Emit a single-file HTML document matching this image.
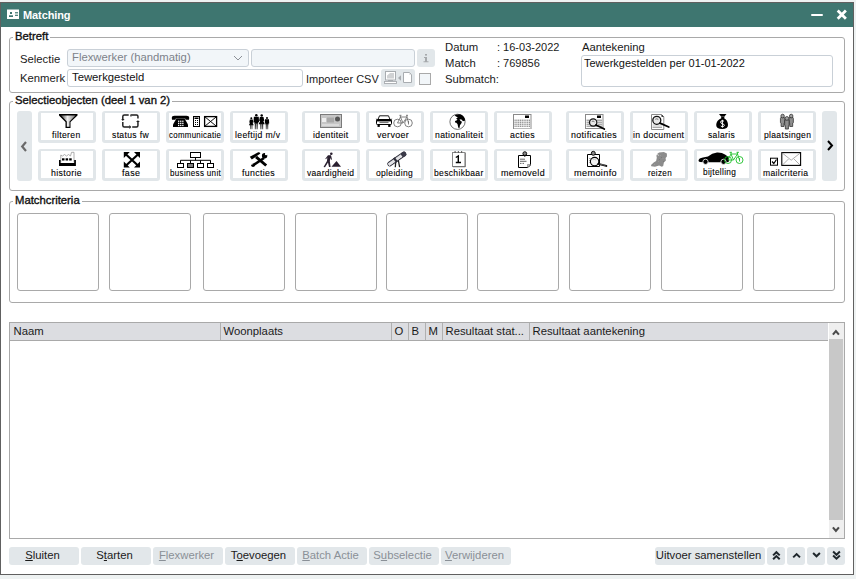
<!DOCTYPE html>
<html><head><meta charset="utf-8">
<style>
*{box-sizing:border-box;margin:0;padding:0}
html,body{width:856px;height:579px;overflow:hidden;background:#eef2f2;font-family:"Liberation Sans",sans-serif;font-size:11.3px;color:#1a1a1a}
.a{position:absolute}
#win{position:absolute;left:0;top:2px;width:854px;height:573px;background:#fff;border:1px solid #606060}
#title{position:absolute;left:1px;top:3px;width:852px;height:24px;background:#3e7670;color:#fff;font-weight:bold;font-size:11px}
.fs{position:absolute;border:1px solid #a9a9a9;border-radius:3px}
.lg{position:absolute;background:#fff;font-weight:normal;font-size:11.3px;-webkit-text-stroke:0.35px #111;padding:0 2px 0 2px;line-height:13px;color:#111}
.t{position:absolute;white-space:pre;line-height:13px}
.inp{position:absolute;border:1px solid #c9d0d7;border-radius:3px;background:#fff}
.dis{background:#f2f6f9;color:#7b8088}
.tile{position:absolute;width:58px;height:32px;border:3px solid #e1e6e9;border-top-width:2px;border-radius:3px;background:#fff}
.lb{position:absolute;font-size:9px;line-height:11px;color:#000;white-space:nowrap;transform-origin:0 0;-webkit-text-stroke:0.1px #000}
.arr{position:absolute;width:15px;height:70px;background:#e2e7ea;border-radius:3px}
.box{position:absolute;top:213px;width:82px;height:78px;border:1px solid #a9a9a9;border-radius:3px}
.btn{position:absolute;top:547px;height:18px;width:70px;background:#e2e7ea;border-radius:3px;text-align:center;line-height:17px;padding-right:3px;color:#1a1a1a}
.btn.d{color:#8a9097}
u{text-decoration:underline;text-underline-offset:1px;text-decoration-thickness:1px}
.hd{position:absolute;top:0;height:18px;line-height:17px;border-left:1px solid #b4b4b4;padding-left:3px;white-space:nowrap;overflow:hidden}
</style></head><body>
<div id="win"></div>
  <div id="title">
    <svg class="a" style="left:0;top:0" width="24" height="24" viewBox="0 0 24 24"><rect x="6" y="6.5" width="12" height="9.5" fill="#fff"/><rect x="9" y="9" width="2" height="2" fill="#3e7670"/><rect x="8" y="12.3" width="4" height="1.7" fill="#3e7670"/><rect x="14" y="9.6" width="3" height="2.4" fill="#c4d6d3"/><rect x="14" y="9.2" width="3" height="0.9" fill="#3e7670"/><rect x="14" y="12" width="3" height="0.9" fill="#3e7670"/></svg>
    <div class="t" style="left:22px;top:6px;font-weight:bold;letter-spacing:-0.1px">Matching</div>
    <div class="a" style="left:810px;top:10.5px;width:12px;height:2.5px;background:#fff;border-radius:1px"></div>
    <svg class="a" style="left:835px;top:6px" width="12" height="12" viewBox="0 0 12 12"><path d="M1.7 1.5 L9.9 9.7 M9.9 1.5 L1.7 9.7" stroke="#fff" stroke-width="2.8"/></svg>
  </div>
<!-- Betreft -->
<div class="fs" style="left:9px;top:37px;width:836px;height:56px"></div>
<div class="lg" style="left:13px;top:30px">Betreft</div>
<div class="t" style="left:20px;top:53px">Selectie</div>
<div class="t" style="left:20px;top:72px">Kenmerk</div>
<div class="inp dis" style="left:67px;top:49px;width:182px;height:18px"></div>
<div class="t" style="left:72px;top:51px;color:#7d828a">Flexwerker (handmatig)</div>
<svg class="a" style="left:233px;top:55px" width="10" height="6" viewBox="0 0 10 6"><path d="M1 1 L5 5 L9 1" fill="none" stroke="#80858b" stroke-width="0.9"/></svg>
<div class="inp dis" style="left:251px;top:49px;width:164px;height:18px"></div>
<div class="a" style="left:417px;top:49px;width:18px;height:18px;background:#e2e7ea;border-radius:3px"></div>
<svg class="a" style="left:417px;top:49px" width="18" height="18" viewBox="0 0 18 18"><rect x="8" y="5" width="2" height="1.6" fill="#a6a9ac"/><path d="M7 8 H10 V12.3 H11.5 V13.3 H6.5 V12.3 H8 V9 H7Z" fill="#a6a9ac"/></svg>
<div class="inp" style="left:67px;top:69px;width:236px;height:18px"></div>
<div class="t" style="left:72px;top:71px;color:#111">Tewerkgesteld</div>
<div class="t" style="left:306px;top:73px;font-size:11px">Importeer CSV</div>
<div class="a" style="left:381px;top:69px;width:34px;height:18px;background:#e2e7ea;border-radius:3px"></div>
<svg class="a" style="left:381px;top:69px" width="34" height="18" viewBox="0 0 34 18">
  <rect x="4.5" y="2.5" width="10" height="8.5" fill="#fff" stroke="#a8acb0"/>
  <rect x="6" y="4" width="7" height="5.5" fill="#d0d2d4"/>
  <path d="M6 4 H9 L6 6.5Z" fill="#fff"/>
  <rect x="7" y="11" width="5" height="1.2" fill="#a8acb0"/>
  <rect x="3.5" y="12.5" width="12" height="2" fill="#fff" stroke="#a8acb0" stroke-width="0.9"/>
  <path d="M17 9 L20 6.3 L20 11.7Z" fill="#a8acb0"/>
  <path d="M22.5 3.5 H28.5 L30.5 5.5 V13.5 H22.5Z" fill="#fff" stroke="#a8acb0"/>
  <path d="M28.3 3.7 V5.7 H30.3" fill="#d0d2d4"/>
</svg>
<div class="a" style="left:419px;top:73px;width:12px;height:12px;border:1px solid #a9a9a9;background:#f2f6f9"></div>
<div class="t" style="left:445px;top:41px">Datum</div>
<div class="t" style="left:497px;top:41px;font-size:11px">: 16-03-2022</div>
<div class="t" style="left:445px;top:57px">Match</div>
<div class="t" style="left:497px;top:57px;font-size:11px">: 769856</div>
<div class="t" style="left:445px;top:73px">Submatch:</div>
<div class="t" style="left:582px;top:41px">Aantekening</div>
<div class="inp" style="left:581px;top:55px;width:252px;height:32px"></div>
<div class="t" style="left:584px;top:57px;color:#111;font-size:11px">Tewerkgestelden per 01-01-2022</div>

<!-- Selectieobjecten -->
<div class="fs" style="left:9px;top:101px;width:836px;height:90px"></div>
<div class="lg" style="left:13px;top:94px">Selectieobjecten (deel 1 van 2)</div>
<div class="arr" style="left:17px;top:111px"></div>
<svg class="a" style="left:20px;top:140.5px" width="8" height="11" viewBox="0 0 8 11"><path d="M6 1 L2.2 5.5 L6 10" fill="none" stroke="#6a6a6a" stroke-width="2.2"/></svg>
<div class="arr" style="left:822px;top:111px"></div>
<svg class="a" style="left:826px;top:140px" width="8" height="11" viewBox="0 0 8 11"><path d="M2 1 L6 5.5 L2 10" fill="none" stroke="#000" stroke-width="2"/></svg>
<div class="tile" style="left:38px;top:111px"></div>
<svg class="a" style="left:38px;top:111px" width="58" height="32" viewBox="0 0 58 32">
<defs><linearGradient id="fg" x1="0" y1="0" x2="1" y2="0"><stop offset="0" stop-color="#444"/><stop offset="0.45" stop-color="#eee"/><stop offset="1" stop-color="#777"/></linearGradient></defs>
<path d="M21 3 H39.5 V4.5 L32.5 11 V17 H27.5 V11 L21 4.5 Z" fill="#000"/>
<path d="M23 4.5 H37.5 L31.5 10.5 V15.8 H28.8 V10.5 Z" fill="url(#fg)"/>
</svg>
<div class="lb" style="left:52.30px;top:129.98px;letter-spacing:0.35px;transform:scaleX(0.956)">filteren</div>
<div class="tile" style="left:102px;top:111px"></div>
<svg class="a" style="left:102px;top:111px" width="58" height="32" viewBox="0 0 58 32">
<g fill="none" stroke="#1e1e1e" stroke-width="1.45" stroke-linejoin="round">
<path d="M26.7 3.9 H22.3 Q20.8 3.9 20.8 5.4 V8.6"/>
<path d="M28.6 3.9 H34.6 Q35.95 3.9 35.95 5.3 V7.6"/>
<path d="M20.8 11 V14.4 Q20.8 15.9 22.3 15.9 H27.8"/>
<path d="M30.2 15.9 H34.5 Q35.95 15.9 35.95 14.4 V10.5"/>
</g>
<path d="M19.2 8.1 H22.6 L20.8 9.9Z M27.4 13.9 V17.9 L29.3 15.9Z M34 11.1 H37.9 L35.95 9.2Z M28.4 3.3 V5.5 L29.6 5.8Z" fill="#1e1e1e"/>
</svg>
<div class="lb" style="left:112.30px;top:129.98px;letter-spacing:0.35px;transform:scaleX(0.955)">status fw</div>
<div class="tile" style="left:166px;top:111px"></div>
<svg class="a" style="left:166px;top:111px" width="58" height="32" viewBox="0 0 58 32">
<path d="M5.8 7 Q5.8 4.8 8.5 4.8 H20.5 Q23.2 4.8 23.2 7 L23 8.8 H19.5 L19.2 7.4 H9.8 L9.5 8.8 H6Z" fill="#000"/>
<path d="M10.5 7.5 H18.5 L22 13.5 V16 H7 V13.5Z" fill="#000"/>
<g fill="#fff"><rect x="12" y="9.6" width="1.3" height="1.3"/><rect x="14.1" y="9.6" width="1.3" height="1.3"/><rect x="16.2" y="9.6" width="1.3" height="1.3"/>
<rect x="12" y="11.7" width="1.3" height="1.3"/><rect x="14.1" y="11.7" width="1.3" height="1.3"/><rect x="16.2" y="11.7" width="1.3" height="1.3"/>
<rect x="12" y="13.8" width="1.3" height="1.3"/><rect x="14.1" y="13.8" width="1.3" height="1.3"/><rect x="16.2" y="13.8" width="1.3" height="1.3"/></g>
<rect x="27.5" y="5.5" width="6" height="10" fill="#fff" stroke="#000" stroke-width="1"/>
<rect x="28.5" y="6.5" width="4" height="1.5" fill="#000"/>
<g fill="#000"><rect x="29" y="9" width="1" height="1"/><rect x="31" y="9" width="1" height="1"/><rect x="29" y="11" width="1" height="1"/><rect x="31" y="11" width="1" height="1"/><rect x="29" y="13" width="1" height="1"/><rect x="31" y="13" width="1" height="1"/></g>
<rect x="38.6" y="5.6" width="12" height="9.8" fill="#fff" stroke="#000" stroke-width="1.3"/>
<path d="M38.6 5.6 L50.6 15.4 M50.6 5.6 L38.6 15.4" stroke="#000" stroke-width="0.95"/>
</svg>
<div class="lb" style="left:169.20px;top:129.98px;letter-spacing:0.35px;transform:scaleX(0.874)">communicatie</div>
<div class="tile" style="left:230px;top:111px"></div>
<svg class="a" style="left:230px;top:111px" width="58" height="32" viewBox="0 0 58 32"><defs><linearGradient id="lg" x1="0" y1="0" x2="0" y2="1"><stop offset="0" stop-color="#222"/><stop offset="1" stop-color="#777"/></linearGradient></defs><circle cx="21.3" cy="7.16" r="1.00" fill="#000"/><path d="M19.86 8.44 H22.74 L23.38 11.40 L22.58 11.64 L23.70 14.20 H18.90 L20.02 11.64 L19.22 11.40Z" fill="#000"/><rect x="20.10" y="13.64" width="1.04" height="4.56" fill="url(#lg)"/><rect x="21.46" y="13.64" width="1.04" height="4.56" fill="url(#lg)"/><circle cx="26.3" cy="4.22" r="1.27" fill="#000"/><path d="M23.85 5.86 H28.75 L29.05 11.16 H28.14 V12.69 H24.46 V11.16 H23.55Z" fill="#000"/><rect x="24.77" y="12.49" width="1.33" height="5.81" fill="url(#lg)"/><rect x="26.50" y="12.49" width="1.33" height="5.81" fill="url(#lg)"/><circle cx="31.7" cy="4.50" r="1.25" fill="#000"/><path d="M29.90 6.10 H33.50 L34.30 9.80 L33.30 10.10 L34.70 13.30 H28.70 L30.10 10.10 L29.10 9.80Z" fill="#000"/><rect x="30.20" y="12.60" width="1.30" height="5.70" fill="url(#lg)"/><rect x="31.90" y="12.60" width="1.30" height="5.70" fill="url(#lg)"/><circle cx="37" cy="6.98" r="1.03" fill="#000"/><path d="M35.03 8.30 H38.97 L39.21 12.56 H38.48 V13.79 H35.52 V12.56 H34.79Z" fill="#000"/><rect x="35.77" y="13.63" width="1.07" height="4.67" fill="url(#lg)"/><rect x="37.16" y="13.63" width="1.07" height="4.67" fill="url(#lg)"/></svg>
<div class="lb" style="left:235.30px;top:129.98px;letter-spacing:0.35px;transform:scaleX(0.960)">leeftijd m/v</div>
<div class="tile" style="left:302px;top:111px"></div>
<svg class="a" style="left:302px;top:111px" width="58" height="32" viewBox="0 0 58 32">
<rect x="18.5" y="3.5" width="21" height="13" fill="#c6c6c6" stroke="#7a7a7a" stroke-width="1"/>
<rect x="20" y="7" width="4" height="4" fill="#eee"/>
<rect x="25" y="6.5" width="7" height="5" fill="#a8a8a8"/>
<circle cx="35.5" cy="8" r="2.5" fill="#555"/>
<rect x="20" y="13" width="17" height="2" fill="#dadada"/>
</svg>
<div class="lb" style="left:313.00px;top:129.98px;letter-spacing:0.35px;transform:scaleX(0.959)">identiteit</div>
<div class="tile" style="left:366px;top:111px"></div>
<svg class="a" style="left:366px;top:111px" width="58" height="32" viewBox="0 0 58 32">
<path d="M12 8.5 L13.5 4.8 H22.5 L24 8.5Z" fill="#fff" stroke="#000" stroke-width="0.9"/>
<path d="M9.5 7.8 L12 8 L11.5 9 Z M26.5 7.8 L24 8 L24.5 9Z" fill="#000"/>
<rect x="10.5" y="8.5" width="15" height="5" rx="0.8" fill="#fff" stroke="#000" stroke-width="1"/>
<rect x="10.8" y="8.6" width="14.4" height="1.8" fill="#000"/>
<rect x="13.5" y="10.8" width="9" height="1.3" fill="#777"/>
<rect x="11.5" y="13.4" width="2.3" height="2.5" fill="#000"/>
<rect x="22.2" y="13.4" width="2.3" height="2.5" fill="#000"/>
<g fill="none" stroke="#6a6a6a" stroke-width="0.85">
<circle cx="31.5" cy="12" r="3.8"/><circle cx="42.5" cy="12" r="3.8"/>
<path d="M31.5 12 L34.5 6 H41 L42.5 12 M34.5 6 L37 12 H31.5 M41 6 L37 12 M33.5 4.3 H35.5 M40 4.3 H42 M34.5 6 L34.2 4.3 M41 6 L41 4.3 M42.5 10 V13.5"/>
</g>
</svg>
<div class="lb" style="left:377.40px;top:129.98px;letter-spacing:0.35px;transform:scaleX(0.989)">vervoer</div>
<div class="tile" style="left:430px;top:111px"></div>
<svg class="a" style="left:430px;top:111px" width="58" height="32" viewBox="0 0 58 32">
<circle cx="27.5" cy="10.8" r="7.6" fill="#fff" stroke="#333" stroke-width="0.7"/>
<path d="M24.5 4.5 Q28 2.8 31 3.6 Q34.5 5 35.2 9.5 L33 10.2 L31.5 8.5 L29.5 8.2 L30.5 10 L32 10.8 L31 13 L30 14 L29.5 17 L28.3 16.8 L27.5 13 L26 11.5 L25.2 11.8 L25 10 L26.5 9.5 L27.5 8.5 L26 7.8 L27.8 6.5 L26.5 5.8 Z" fill="#000"/>
</svg>
<div class="lb" style="left:434.60px;top:129.98px;letter-spacing:0.35px;transform:scaleX(0.961)">nationaliteit</div>
<div class="tile" style="left:494px;top:111px"></div>
<svg class="a" style="left:494px;top:111px" width="58" height="32" viewBox="0 0 58 32">
<rect x="19.5" y="3.5" width="17.5" height="14" fill="#fff" stroke="#8a8a8a" stroke-width="1"/>
<path d="M37 4 V17.5 H20" fill="none" stroke="#c8c8c8" stroke-width="0.8"/>
<rect x="31" y="4.5" width="4" height="2.5" fill="#000"/>
<g stroke="#555" stroke-width="0.9" stroke-dasharray="1.2 0.6"><path d="M20.5 9.2 H36"/><path d="M20.5 11.2 H36"/><path d="M20.5 13.2 H36"/><path d="M20.5 15.2 H36"/></g>
</svg>
<div class="lb" style="left:509.50px;top:129.98px;letter-spacing:0.35px;transform:scaleX(0.977)">acties</div>
<div class="tile" style="left:566px;top:111px"></div>
<svg class="a" style="left:566px;top:111px" width="58" height="32" viewBox="0 0 58 32">
<rect x="19.5" y="3.5" width="17.5" height="14" fill="#fff" stroke="#8a8a8a" stroke-width="1"/>
<rect x="31" y="4.5" width="4" height="2.5" fill="#000"/>
<g stroke="#777" stroke-width="0.9"><path d="M20.5 9.2 H24 M31 9.2 H36"/><path d="M20.5 11.2 H23 M32 11.2 H36"/><path d="M20.5 13.2 H23 M32 13.2 H36"/><path d="M20.5 15.2 H36"/></g>
<circle cx="27.2" cy="11.5" r="3.7" fill="#e8e8e8" stroke="#111" stroke-width="1.3"/>
<path d="M25.8 10.5 Q27 9.5 28.5 10.8" fill="none" stroke="#444" stroke-width="0.7"/>
<path d="M30 14 L38.3 18" stroke="#000" stroke-width="1.8" stroke-linecap="round"/>
</svg>
<div class="lb" style="left:571.30px;top:129.98px;letter-spacing:0.35px;transform:scaleX(0.985)">notificaties</div>
<div class="tile" style="left:630px;top:111px"></div>
<svg class="a" style="left:630px;top:111px" width="58" height="32" viewBox="0 0 58 32">
<path d="M21.5 3.5 H31.5 L33.8 5.8 V18.5 H21.5Z" fill="#fff" stroke="#8a8a8a" stroke-width="1"/>
<path d="M31.5 3.5 V5.8 H33.8" fill="#000"/>
<path d="M22.5 16.2 H32" stroke="#666" stroke-width="0.8"/>
<path d="M22.5 14 H32" stroke="#999" stroke-width="0.6"/>
<circle cx="26.8" cy="9.3" r="4" fill="#e8e8e8" stroke="#111" stroke-width="1.3"/>
<path d="M25.3 8.3 Q26.8 7.2 28.3 8.5" fill="none" stroke="#444" stroke-width="0.7"/>
<path d="M30 12.2 L38.8 16" stroke="#000" stroke-width="1.8" stroke-linecap="round"/>
</svg>
<div class="lb" style="left:633.40px;top:129.98px;letter-spacing:0.35px;transform:scaleX(0.971)">in document</div>
<div class="tile" style="left:694px;top:111px"></div>
<svg class="a" style="left:694px;top:111px" width="58" height="32" viewBox="0 0 58 32">
<path d="M25 3 H32.5 L30.5 5.5 H27Z" fill="#000"/>
<path d="M27 5.5 H30.5 L30.2 7.2 Q34 9.5 34 14 Q34 18 28.3 18 Q22.2 18 22.2 14 Q22.2 9.5 27.3 7.2Z" fill="#000"/>
<path d="M30 10.5 Q29.5 9.7 28.3 9.7 Q26.6 9.8 26.6 11.2 Q26.7 12.4 28.5 12.8 Q30.4 13.3 30.3 14.4 Q30.1 15.8 28.3 15.7 Q27 15.6 26.6 14.8 M28.4 8.8 V16.6" fill="none" stroke="#fff" stroke-width="1"/>
</svg>
<div class="lb" style="left:708.40px;top:129.98px;letter-spacing:0.35px;transform:scaleX(0.949)">salaris</div>
<div class="tile" style="left:758px;top:111px"></div>
<svg class="a" style="left:758px;top:111px" width="58" height="32" viewBox="0 0 58 32"><path d="M22.43 7.47 Q22.43 6.30 23.60 6.30 H25.60 Q26.77 6.30 26.77 7.47 V11.63 L26.10 12.05 V15.47 H23.10 V12.05 L22.43 11.63Z" fill="#8e8e8e" stroke="#222" stroke-width="0.7"/><ellipse cx="24.6" cy="5.05" rx="1.75" ry="1.83" fill="#a0a0a0" stroke="#222" stroke-width="0.7"/><path d="M31.03 7.47 Q31.03 6.30 32.20 6.30 H34.20 Q35.37 6.30 35.37 7.47 V11.63 L34.70 12.05 V15.47 H31.70 V12.05 L31.03 11.63Z" fill="#8e8e8e" stroke="#222" stroke-width="0.7"/><ellipse cx="33.2" cy="5.05" rx="1.75" ry="1.83" fill="#a0a0a0" stroke="#222" stroke-width="0.7"/><path d="M26.68 9.87 Q26.68 8.67 27.88 8.67 H29.92 Q31.12 8.67 31.12 9.87 V14.13 L30.44 14.56 V18.06 H27.36 V14.56 L26.68 14.13Z" fill="#8e8e8e" stroke="#222" stroke-width="0.7"/><ellipse cx="28.9" cy="7.39" rx="1.79" ry="1.88" fill="#a0a0a0" stroke="#222" stroke-width="0.7"/></svg>
<div class="lb" style="left:763.50px;top:129.98px;letter-spacing:0.35px;transform:scaleX(0.947)">plaatsingen</div>
<div class="tile" style="left:38px;top:149px"></div>
<svg class="a" style="left:38px;top:149px" width="58" height="32" viewBox="0 0 58 32">
<path d="M22.8 13.5 V6 L24.5 7 L26.5 5.5 L28.5 7 L30.5 5.5 L32.5 7 L33.5 3.3 H36 V13.5" fill="#fff" stroke="#999" stroke-width="0.8"/>
<rect x="24" y="9.3" width="2.5" height="2.2" fill="#000"/>
<rect x="27.6" y="9.3" width="2.5" height="2.2" fill="#000"/>
<rect x="31.2" y="9.3" width="2.5" height="2.2" fill="#000"/>
<path d="M21 11 H22.6 V14 H36.2 V11 H37.9 V17 H21Z" fill="#000"/>
</svg>
<div class="lb" style="left:51.40px;top:167.98px;letter-spacing:0.35px;transform:scaleX(0.975)">historie</div>
<div class="tile" style="left:102px;top:149px"></div>
<svg class="a" style="left:102px;top:149px" width="58" height="32" viewBox="0 0 58 32">
<g stroke="#000" stroke-width="2.2"><path d="M23.5 5 L36.5 17 M36.5 5 L23.5 17"/></g>
<path d="M21.8 3 H27.8 L21.8 9Z M38 3 H32 L38 9Z M21.8 18.6 H27.8 L21.8 12.6Z M38 18.6 H32 L38 12.6Z" fill="#000"/>
</svg>
<div class="lb" style="left:122.20px;top:167.98px;letter-spacing:0.35px;transform:scaleX(0.995)">fase</div>
<div class="tile" style="left:166px;top:149px"></div>
<svg class="a" style="left:166px;top:149px" width="58" height="32" viewBox="0 0 58 32">
<g fill="none" stroke="#000" stroke-width="1">
<rect x="24.5" y="3.5" width="10" height="5"/>
<path d="M29.5 8.5 V11.3 M14.5 14 V11.3 H44.5 V14 M24.5 11.3 V14 M34.5 11.3 V14"/>
<rect x="11.5" y="14.5" width="6" height="4"/>
<rect x="31.5" y="14.5" width="6" height="4"/>
<rect x="41.5" y="14.5" width="6" height="4"/>
</g>
<rect x="21.5" y="14.5" width="6" height="4" fill="#808080" stroke="#000" stroke-width="1"/>
</svg>
<div class="lb" style="left:169.50px;top:167.98px;letter-spacing:0.35px;transform:scaleX(0.894)">business unit</div>
<div class="tile" style="left:230px;top:149px"></div>
<svg class="a" style="left:230px;top:149px" width="58" height="32" viewBox="0 0 58 32">
<path d="M26 7.9 L36.2 16.5" stroke="#000" stroke-width="2.9"/>
<path d="M19.8 7.8 L28.2 3.2 Q29.8 3 30.4 4.6 L21.8 10.6 Z" fill="#000"/>
<path d="M34 9 L23.2 16.3" stroke="#000" stroke-width="2.6"/>
<circle cx="34.6" cy="6.8" r="2.7" fill="#000"/>
<circle cx="36.2" cy="4.9" r="1.3" fill="#fff"/>
<circle cx="23" cy="16.2" r="1.8" fill="#000"/>
<circle cx="21.9" cy="14.9" r="0.8" fill="#fff"/>
</svg>
<div class="lb" style="left:242.40px;top:167.98px;letter-spacing:0.35px;transform:scaleX(0.976)">functies</div>
<div class="tile" style="left:302px;top:149px"></div>
<svg class="a" style="left:302px;top:149px" width="58" height="32" viewBox="0 0 58 32">
<circle cx="29.3" cy="4.7" r="1.3" fill="#2a2030"/>
<path d="M26 6.2 H29 L30 10.5 L29.2 10.8 L28.5 9 L27.8 12 L28.6 18 L27 18 L26 13.5 L23 18.3 L21.5 18 L25 12 L25.3 8.5 L24 10.2 L23.3 9.8Z" fill="#2a2030"/>
<path d="M29.5 17.8 L34.5 12 L39 17.8Z" fill="#2a2030"/>
</svg>
<div class="lb" style="left:307.30px;top:167.98px;letter-spacing:0.35px;transform:scaleX(0.941)">vaardigheid</div>
<div class="tile" style="left:366px;top:149px"></div>
<svg class="a" style="left:366px;top:149px" width="58" height="32" viewBox="0 0 58 32">
<path d="M29.8 12 L29.3 18.2 M32.3 11 L33.6 18.2" stroke="#222" stroke-width="1.3" fill="none"/>
<g transform="translate(30.8 10) rotate(-35)">
<rect x="-11" y="-2.5" width="22" height="5" rx="2.2" fill="#2c2c38"/>
<rect x="-10" y="-1.5" width="16" height="3" fill="#d8d8dc"/>
<path d="M-10 -0.3 H6 M-10 0.9 H6" stroke="#fff" stroke-width="0.6" stroke-dasharray="1.2 0.6"/>
<rect x="-2.8" y="-2.7" width="2.2" height="5.4" fill="#2c2c38"/>
<rect x="6" y="-2.5" width="5" height="5" rx="2.2" fill="#3a3a48"/>
</g>
</svg>
<div class="lb" style="left:376.30px;top:167.98px;letter-spacing:0.35px;transform:scaleX(0.945)">opleiding</div>
<div class="tile" style="left:430px;top:149px"></div>
<svg class="a" style="left:430px;top:149px" width="58" height="32" viewBox="0 0 58 32">
<rect x="22.5" y="3.5" width="12.5" height="14" fill="#fff" stroke="#888" stroke-width="1"/>
<path d="M35.3 4 V17.8 H23" fill="none" stroke="#666" stroke-width="0.8"/>
<g fill="#333"><rect x="24.5" y="2.3" width="1.2" height="1.2"/><rect x="27.8" y="2.3" width="1.2" height="1.2"/><rect x="31" y="2.3" width="1.2" height="1.2"/></g>
<path d="M25.8 8.5 L28.3 7 V13.3 M25.8 13.5 H31" fill="none" stroke="#000" stroke-width="1.4"/>
</svg>
<div class="lb" style="left:433.70px;top:167.98px;letter-spacing:0.35px;transform:scaleX(0.947)">beschikbaar</div>
<div class="tile" style="left:494px;top:149px"></div>
<svg class="a" style="left:494px;top:149px" width="58" height="32" viewBox="0 0 58 32">
<path d="M24.5 6.5 H36.5 V16 L34 18.5 H24.5Z" fill="#fff" stroke="#000" stroke-width="1"/>
<path d="M36.5 15.5 L33.5 15.5 L33.5 18.5Z" fill="#bbb" stroke="#777" stroke-width="0.6"/>
<circle cx="30.8" cy="4.6" r="1.9" fill="#888" stroke="#000" stroke-width="0.9"/>
<path d="M30.8 6.5 V8" stroke="#000" stroke-width="0.8"/>
<g stroke="#555" stroke-width="0.9"><path d="M26 10.2 H31"/><path d="M26 12.3 H32.5"/><path d="M26 14.4 H27.5 M28.5 14.4 H30"/></g>
</svg>
<div class="lb" style="left:500.60px;top:167.98px;letter-spacing:0.35px;transform:scaleX(0.993)">memoveld</div>
<div class="tile" style="left:566px;top:149px"></div>
<svg class="a" style="left:566px;top:149px" width="58" height="32" viewBox="0 0 58 32">
<path d="M21.5 5.5 H33.5 V17.5 H21.5Z" fill="#fff" stroke="#000" stroke-width="1"/>
<circle cx="27.3" cy="4.3" r="2" fill="#8a8a8a" stroke="#000" stroke-width="0.9"/>
<path d="M23 9.5 H25 M23 11.5 H24 M23 13.5 H24" stroke="#888" stroke-width="0.7"/>
<circle cx="28.6" cy="12.6" r="4.2" fill="#f2f2f2" stroke="#000" stroke-width="1.1"/>
<path d="M26.6 10.8 Q28.2 9.6 30.2 11.2" fill="none" stroke="#c4c4c4" stroke-width="0.9"/>
<path d="M32.3 14.9 L40.3 16.9" stroke="#000" stroke-width="2" stroke-linecap="round"/>
<path d="M33.5 15 L39.5 16.5" stroke="#999" stroke-width="0.6"/>
</svg>
<div class="lb" style="left:573.60px;top:167.98px;letter-spacing:0.35px;transform:scaleX(1.017)">memoinfo</div>
<div class="tile" style="left:630px;top:149px"></div>
<svg class="a" style="left:630px;top:149px" width="58" height="32" viewBox="0 0 58 32">
<path d="M27.1 5.1 L29.1 3.4 L33.9 3 L36.9 4.4 L36.9 7.5 L35.6 9.1 L35.9 11.5 L33.9 13.5 L33.2 16.9 L31.8 17.7 L29.1 16.6 L25 17.7 L21.3 17.3 L21 15.9 L23.7 13.5 L26.1 11.9 L26.8 8.8 L26.4 6.8 Z" fill="#8c8c8c"/>
<path d="M27.6 5.2 L28.4 6.6" stroke="#f0f0f0" stroke-width="1"/>
<g fill="#9a9a9a"><rect x="30" y="6" width="1" height="1"/><rect x="32.5" y="9" width="1" height="1"/><rect x="28" y="12" width="1" height="1"/><rect x="24" y="15" width="1" height="1"/></g>
<g fill="#7a7a7a"><rect x="31" y="8" width="1" height="1"/><rect x="29" y="10" width="1" height="1"/><rect x="33" y="12" width="1" height="1"/></g>
</svg>
<div class="lb" style="left:647.50px;top:167.98px;letter-spacing:0.35px;transform:scaleX(0.902)">reizen</div>
<div class="tile" style="left:694px;top:149px"></div>
<svg class="a" style="left:694px;top:149px" width="58" height="32" viewBox="0 0 58 32">
<path d="M4.5 11.5 Q4.8 9 9 8.5 L14 7.5 Q18 4 23 3.5 Q28 3.3 31 5.5 L34.5 8 Q35.5 9.5 35 12.5 L33 13.3 H10 L6 13 Q4.5 12.8 4.5 11.5Z" fill="#000"/>
<circle cx="11.5" cy="12.8" r="2.6" fill="#000" stroke="#fff" stroke-width="0.8"/>
<circle cx="29.5" cy="12.8" r="2.6" fill="#000" stroke="#fff" stroke-width="0.8"/>
<g fill="none" stroke="#1ec02a" stroke-width="0.9">
<circle cx="34" cy="11" r="3.5"/><circle cx="45.5" cy="11" r="3.5"/>
<path d="M34 11 L37 5 H43.5 L45.5 11 M37 5 L39.5 11 H34 M43.5 5 L39.5 11 M35.5 3.3 H38 M42.5 3.3 H45 M37 5 L36.7 3.3 M43.5 5 L43.5 3.3 M45.5 9 V12.5"/>
</g>
</svg>
<div class="lb" style="left:703.30px;top:167.38px;letter-spacing:0.35px;transform:scaleX(0.922)">bijtelling</div>
<div class="tile" style="left:758px;top:149px"></div>
<svg class="a" style="left:758px;top:149px" width="58" height="32" viewBox="0 0 58 32">
<rect x="12.5" y="9.2" width="7" height="7" fill="#fff" stroke="#000" stroke-width="1"/>
<path d="M14 12.5 L15.8 14.5 L18.5 10.5" fill="none" stroke="#000" stroke-width="1.2"/>
<rect x="23.8" y="3.6" width="18.8" height="12.8" fill="#fff" stroke="#000" stroke-width="1.1"/>
<path d="M24.5 4.2 L33.2 11.2 L42 4.2 M24.5 16 L30.5 10 M42 16 L36 10" fill="none" stroke="#777" stroke-width="0.6"/>
</svg>
<div class="lb" style="left:763.30px;top:167.98px;letter-spacing:0.35px;transform:scaleX(0.950)">mailcriteria</div>
<!-- Matchcriteria -->
<div class="fs" style="left:9px;top:201px;width:836px;height:102px"></div>
<div class="lg" style="left:13px;top:194px">Matchcriteria</div>
<div class="box" style="left:17px"></div>
<div class="box" style="left:109px"></div>
<div class="box" style="left:203px"></div>
<div class="box" style="left:295px"></div>
<div class="box" style="left:386px"></div>
<div class="box" style="left:477px"></div>
<div class="box" style="left:569px"></div>
<div class="box" style="left:661px"></div>
<div class="box" style="left:753px"></div>
<!-- Table -->
<div class="a" style="left:9px;top:322px;width:836px;height:217px;border:1px solid #a9a9a9;background:#fff"></div>
<div class="a" style="left:10px;top:323px;width:818px;height:18px;background:#dcdde1;border-bottom:1px solid #a9a9a9"></div>
<div class="t" style="left:13.5px;top:325px;color:#1a1a1a">Naam</div>
<div class="a" style="left:220px;top:323px;width:1px;height:17px;background:#b0b0b0"></div>
<div class="t" style="left:223.5px;top:325px;color:#1a1a1a">Woonplaats</div>
<div class="a" style="left:391px;top:323px;width:1px;height:17px;background:#b0b0b0"></div>
<div class="t" style="left:394.5px;top:325px;color:#1a1a1a">O</div>
<div class="a" style="left:408px;top:323px;width:1px;height:17px;background:#b0b0b0"></div>
<div class="t" style="left:411.5px;top:325px;color:#1a1a1a">B</div>
<div class="a" style="left:425px;top:323px;width:1px;height:17px;background:#b0b0b0"></div>
<div class="t" style="left:428.5px;top:325px;color:#1a1a1a">M</div>
<div class="a" style="left:442px;top:323px;width:1px;height:17px;background:#b0b0b0"></div>
<div class="t" style="left:445.5px;top:325px;color:#1a1a1a">Resultaat stat...</div>
<div class="a" style="left:529px;top:323px;width:1px;height:17px;background:#b0b0b0"></div>
<div class="t" style="left:532.5px;top:325px;color:#1a1a1a">Resultaat aantekening</div>
<div class="a" style="left:829px;top:323px;width:15px;height:215px;background:#efefef"></div>
<svg class="a" style="left:831px;top:328px" width="10" height="8" viewBox="0 0 10 8"><path d="M1.9 6.6 L4.9 3.1 L7.9 6.6" fill="none" stroke="#4a4a4a" stroke-width="2.1"/></svg>
<div class="a" style="left:829px;top:339px;width:14px;height:181px;background:#c8c8c8"></div>
<svg class="a" style="left:831px;top:526px" width="10" height="8" viewBox="0 0 10 8"><path d="M1.9 1.4 L4.9 4.9 L7.9 1.4" fill="none" stroke="#4a4a4a" stroke-width="2.1"/></svg>
<!-- Buttons -->
<div class="btn" style="left:9px"><u>S</u>luiten</div>
<div class="btn" style="left:81px">S<u>t</u>arten</div>
<div class="btn d" style="left:153px"><u>F</u>lexwerker</div>
<div class="btn" style="left:225px">T<u>o</u>evoegen</div>
<div class="btn d" style="left:297px"><u>B</u>atch Actie</div>
<div class="btn d" style="left:369px">S<u>u</u>bselectie</div>
<div class="btn d" style="left:441px"><u>V</u>erwijderen</div>
<div class="btn" style="left:655px;width:110px">Uitvoer samenstellen</div>
<div class="btn" style="left:767px;width:18px"></div>
<svg class="a" style="left:767px;top:547px" width="18" height="18" viewBox="0 0 18 18"><path d="M6.1 8.4 L9.4 5.2 L12.7 8.4 M6.1 12.3 L9.4 9.1 L12.7 12.3" fill="none" stroke="#1f272c" stroke-width="2"/></svg>
<div class="btn" style="left:787px;width:18px"></div>
<svg class="a" style="left:787px;top:547px" width="18" height="18" viewBox="0 0 18 18"><path d="M6.2 10.4 L9.6 7.1 L13 10.4" fill="none" stroke="#1f272c" stroke-width="2"/></svg>
<div class="btn" style="left:807px;width:18px"></div>
<svg class="a" style="left:807px;top:547px" width="18" height="18" viewBox="0 0 18 18"><path d="M6.1 6 L9.5 9.3 L12.9 6" fill="none" stroke="#1f272c" stroke-width="2"/></svg>
<div class="btn" style="left:827px;width:18px"></div>
<svg class="a" style="left:827px;top:547px" width="18" height="18" viewBox="0 0 18 18"><path d="M6.1 4.6 L9.5 7.8 L12.9 4.6 M6.1 8.5 L9.5 11.7 L12.9 8.5" fill="none" stroke="#1f272c" stroke-width="2"/></svg>
</body></html>
